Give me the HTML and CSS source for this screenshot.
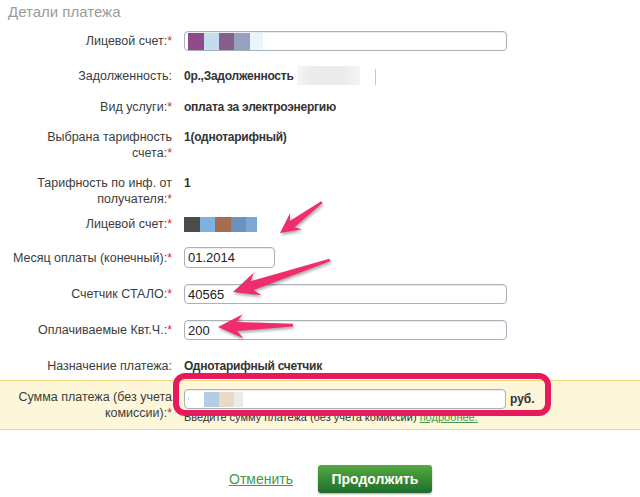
FILE: index.html
```html
<!DOCTYPE html>
<html lang="ru">
<head>
    <meta charset="UTF-8">
    <meta name="viewport" content="width=device-width, initial-scale=1.0">
    <title>Детали платежа</title>
    <link rel="stylesheet" href="styles.css">
</head>
<body>
    <div class="page">
        <h2 class="title">Детали платежа</h2>

        <div class="row row-input">
            <div class="label">Лицевой счет:<span class="req">*</span></div>
            <div class="value">
                <div class="field field-wide"><span class="mask mask-account"></span></div>
            </div>
        </div>

        <div class="row">
            <div class="label">Задолженность:</div>
            <div class="value">0р.,Задолженность <span class="mask mask-debt"></span><span class="caret"></span></div>
        </div>

        <div class="row">
            <div class="label">Вид услуги:<span class="req">*</span></div>
            <div class="value">оплата за электроэнергию</div>
        </div>

        <div class="row row-top">
            <div class="label">Выбрана тарифность<br>счета:<span class="req">*</span></div>
            <div class="value">1(однотарифный)</div>
        </div>

        <div class="row row-top">
            <div class="label">Тарифность по инф. от<br>получателя:<span class="req">*</span></div>
            <div class="value">1</div>
        </div>

        <div class="row row-mask">
            <div class="label">Лицевой счет:<span class="req">*</span></div>
            <div class="value"><span class="mask mask-account2"></span></div>
        </div>

        <div class="row row-input">
            <div class="label">Месяц оплаты (конечный):<span class="req">*</span></div>
            <div class="value"><input class="field field-short" type="text" value="01.2014"></div>
        </div>

        <div class="row row-input">
            <div class="label">Счетчик СТАЛО:<span class="req">*</span></div>
            <div class="value"><input class="field field-wide" type="text" value="40565"></div>
        </div>

        <div class="row row-input">
            <div class="label">Оплачиваемые Квт.Ч.:<span class="req">*</span></div>
            <div class="value"><input class="field field-wide" type="text" value="200"></div>
        </div>

        <div class="row row-purpose">
            <div class="label">Назначение платежа:</div>
            <div class="value">Однотарифный счетчик</div>
        </div>

        <div class="total">
            <div class="label">Сумма платежа (без учета<br>комиссии):<span class="req">*</span></div>
            <div class="total-value">
                <div class="total-line">
                    <div class="field field-sum"><span class="dot"></span><span class="mask mask-sum"></span></div>
                    <span class="currency">руб.</span>
                </div>
                <div class="hint">Введите сумму платежа (без учета комиссии) <a href="#">подробнее.</a></div>
            </div>
        </div>

        <div class="actions">
            <a class="cancel" href="#">Отменить</a>
            <button class="btn" type="button">Продолжить</button>
        </div>

        <!-- annotations drawn over the form -->
        <svg class="marks" width="640" height="497" viewBox="0 0 640 497">
            <g class="arrow">
                <polygon transform="translate(280 233) rotate(-36.4)" points="0,0 20,-10 15,-3.8 52,-1.2 52,1.2 15,3.8 20,10"/>
                <polygon transform="translate(233 292) rotate(-18.3)" points="0,0 26,-12 20,-4.6 102,-1.4 102,1.4 20,4.6 26,12"/>
                <polygon transform="translate(218 327) rotate(-1.5)" points="0,0 25,-12 19,-4.6 75,-1.4 75,1.4 19,4.6 25,12"/>
            </g>
            <rect class="frame" x="176" y="376" width="372" height="37" rx="9"/>
        </svg>
    </div>
</body>
</html>
```

FILE: styles.css
```css
body {
    margin: 0;
    font-family: "Liberation Sans", Arial, sans-serif;
    color: #333;
    background: #fff;
}
.page {
    position: relative;
    width: 640px;
    height: 497px;
    overflow: hidden;
}
.title {
    margin: 0;
    padding: 2px 8px 1px;
    font-size: 15px;
    line-height: 20px;
    font-weight: normal;
    color: #9b9b9b;
}
.row {
    display: flex;
    align-items: center;
    padding: 7px 0;
}
.row-top {
    align-items: flex-start;
}
.row-input {
    padding: 8px 0;
}
.row-mask {
    padding: 2px 0 7px;
}
.row-purpose {
    padding: 10px 0 6px;
}
.label {
    flex-shrink: 0;
    width: 166px;
    padding-left: 6px;
    text-align: right;
    font-size: 12.5px;
    line-height: 16px;
    color: #3c3c3c;
}
.req {
    color: #e0262b;
}
.value {
    display: flex;
    align-items: center;
    margin-left: 12px;
    font-size: 12px;
    line-height: 16px;
    font-weight: bold;
    letter-spacing: -0.25px;
    color: #333;
    white-space: pre;
}
.field {
    box-sizing: border-box;
    display: flex;
    align-items: center;
    height: 20px;
    margin: 0;
    padding: 0 3px;
    border: 1px solid #a9b1bb;
    border-radius: 4px;
    background: #fff;
    box-shadow: inset 0 1px 1px rgba(0, 0, 0, 0.08);
    font-family: "Liberation Sans", Arial, sans-serif;
    font-size: 13px;
    letter-spacing: 0;
    color: #222;
}
.field-wide {
    width: 323px;
}
.field-short {
    width: 91px;
    height: 21px;
}
.field-sum {
    width: 322px;
}
.mask {
    display: inline-block;
}
.mask-account {
    width: 75px;
    height: 17px;
    background: linear-gradient(90deg, #8f4a8c 0 16px, #c5dcef 16px 31px, #855f8d 31px 46px, #97a0be 46px 62px, #e9f5fc 62px);
}
.mask-debt {
    width: 63px;
    height: 19px;
    background: linear-gradient(90deg, #f6f6f6, #ececec 20%, #ebebeb 70%, #f4f4f4);
}
.caret {
    display: inline-block;
    width: 1px;
    height: 16px;
    margin: 3px 0 0 15px;
    background: #c8c8c8;
}
.mask-account2 {
    width: 73px;
    height: 15px;
    background: linear-gradient(90deg, #4b4c48 0 16px, #7bb3dd 16px 31px, #a26e4f 31px 47px, #6a92bd 47px 62px, #7aa7d5 62px);
}
.dot {
    width: 1px;
    height: 2px;
    margin-right: 15px;
    background: #c9c9c9;
}
.mask-sum {
    width: 39px;
    height: 15px;
    background: linear-gradient(90deg, #b5cce2 0 15px, #e8dbc2 15px 30px, #ebebeb 30px);
}
.total {
    display: flex;
    align-items: flex-start;
    padding: 8px 0 5px;
    background: #fdf6d8;
    border-top: 1px solid #f1d67b;
    border-bottom: 1px solid #f1d67b;
}
.total-value {
    margin-left: 12px;
}
.total-line {
    display: flex;
    align-items: center;
}
.currency {
    margin-left: 4px;
    font-size: 12px;
    font-weight: bold;
    color: #333;
}
.hint {
    margin-top: 2px;
    font-size: 11px;
    line-height: 13px;
    color: #333;
}
.hint a {
    color: #3f9a4b;
}
.actions {
    display: flex;
    align-items: center;
    gap: 25px;
    margin-top: 35px;
    padding-left: 229px;
}
.cancel {
    font-size: 14px;
    color: #3f9a4b;
}
.btn {
    width: 114px;
    height: 28px;
    padding: 0;
    border: none;
    border-radius: 3px;
    background: linear-gradient(#55aa40, #1f6c2c);
    box-shadow: 0 1px 2px rgba(0, 0, 0, 0.35);
    color: #fff;
    font-family: "Liberation Sans", Arial, sans-serif;
    font-size: 14px;
    font-weight: bold;
    cursor: pointer;
}
.marks {
    position: absolute;
    top: 0;
    left: 0;
    pointer-events: none;
}
.arrow {
    fill: #f12c6c;
    filter: drop-shadow(1px 2px 1.5px rgba(0, 0, 0, 0.35));
}
.frame {
    fill: none;
    stroke: #e8195c;
    stroke-width: 6;
}
```
